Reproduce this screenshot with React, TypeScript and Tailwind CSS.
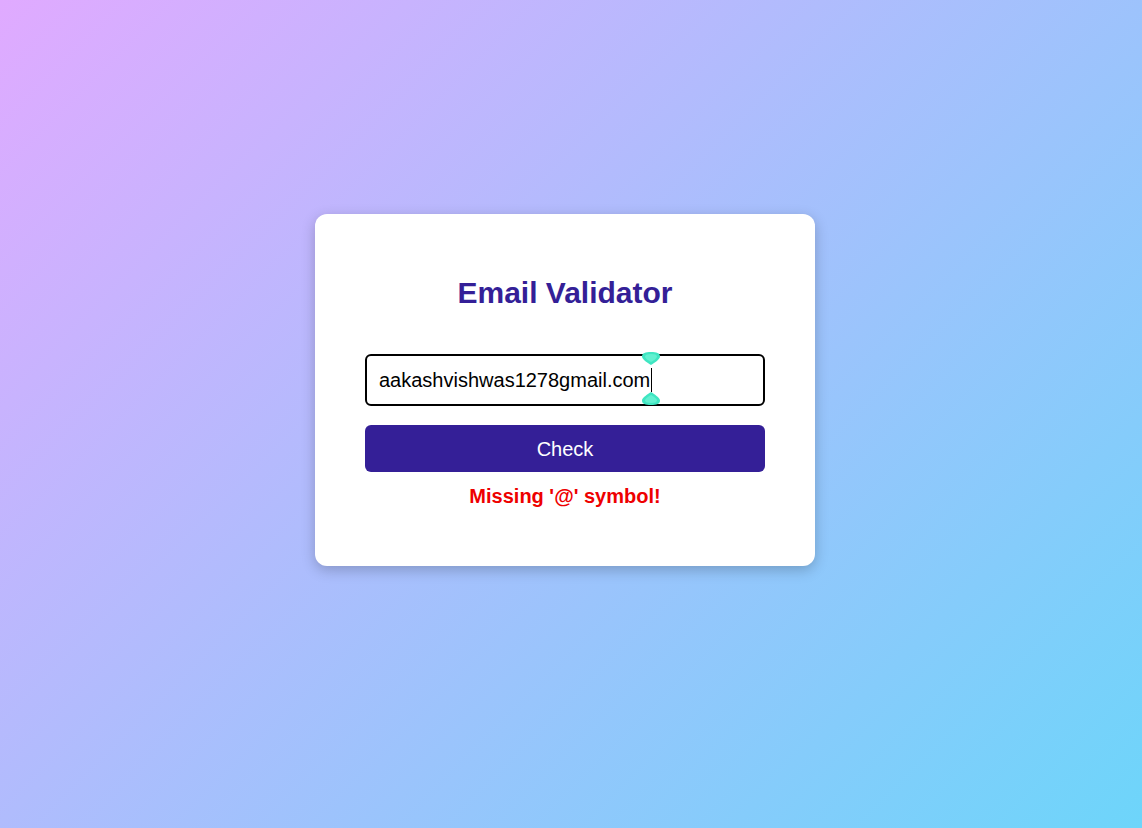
import React from "react";

function Handle({ flip }: { flip?: boolean }) {
  return (
    <svg width="20" height="15" viewBox="0 0 20 15" className={flip ? "rotate-180" : ""}>
      <path d="M1 5.5 C1 2 4.5 1 10 1 C15.5 1 19 2 19 5.5 C19 8.5 13 12 10 14 C7 12 1 8.5 1 5.5 Z" fill="#3fe6c2" />
      <path d="M4 5.5 C4 3.8 6.5 3 10 3 C13.5 3 16 3.8 16 5.5 C16 7.5 12 10 10 11 C8 10 4 7.5 4 5.5 Z" fill="#62f0d0" />
    </svg>
  );
}

export default function App() {
  return (
    <div
      className="min-h-screen w-full flex items-center justify-center pr-[12px] pb-[48px] bg-[linear-gradient(135deg,#e0aaff,#6dd5fa)]"
      style={{ fontFamily: '"Liberation Sans", Arial, sans-serif' }}
    >
      <div className="w-[500px] bg-white rounded-[12px] shadow-[0_4px_14px_rgba(0,0,0,0.22)] px-[50px] pt-[62px] pb-[58px] flex flex-col items-stretch">
        <h2 className="text-[30px] leading-[34px] font-bold text-[#341f97] text-center m-0">
          Email Validator
        </h2>
        <div className="relative mt-[44px]">
          <div className="h-[52px] border-2 border-black rounded-[6px] px-[12px] flex items-center text-[20px] text-black">
            <span>aakashvishwas1278gmail.com</span>
            <span className="inline-block w-px h-[24px] bg-black ml-px"></span>
          </div>
          <div className="absolute left-[276px] top-[-3px]">
            <Handle />
          </div>
          <div className="absolute left-[276px] top-[37px]">
            <Handle flip />
          </div>
        </div>
        <button className="mt-[19px] h-[47px] w-full rounded-[6px] bg-[#341f97] text-white text-[20px] flex items-center justify-center">
          Check
        </button>
        <p className="mt-[13px] text-center text-[20px] leading-[23px] font-bold text-[#ee0000]">
          Missing '@' symbol!
        </p>
      </div>
    </div>
  );
}
